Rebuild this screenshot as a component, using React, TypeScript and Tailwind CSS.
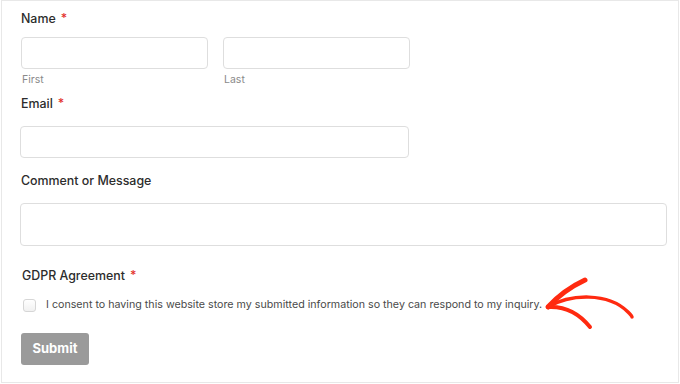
import React from "react";

const font = { fontFamily: "Inter, 'Liberation Sans', sans-serif" };

function Label({ text, required }: { text: string; required?: boolean }) {
  return (
    <div className="text-[12.4px] leading-[16px] font-medium text-[#2c2c2c]">
      {text}
      {required && <span className="text-[#e3342f] ml-[5px]">*</span>}
    </div>
  );
}

export default function App() {
  return (
    <div className="w-[680px] h-[384px] bg-white relative overflow-hidden" style={font}>
      <div className="ml-[1px] w-[678px] h-[383px] border border-[#e8e8e8] pl-[19px] pt-[10px] flex flex-col">
        <Label text="Name" required />
        <div className="flex gap-[15px] mt-[10px] w-[389px]">
          <div className="flex flex-col w-[187px]">
            <div className="h-[32px] border border-[#dedede] rounded-[4px] bg-white" />
            <div className="text-[10.5px] leading-[14px] text-[#8a8a8a] mt-[4px] ml-[1px]">First</div>
          </div>
          <div className="flex flex-col w-[187px]">
            <div className="h-[32px] border border-[#dedede] rounded-[4px] bg-white" />
            <div className="text-[10.5px] leading-[14px] text-[#8a8a8a] mt-[4px] ml-[1px]">Last</div>
          </div>
        </div>
        <div className="mt-[9px]">
          <Label text="Email" required />
        </div>
        <div className="mt-[14px] w-[389px] h-[32px] border border-[#dedede] rounded-[4px] ml-[-1px]" />
        <div className="mt-[15px]">
          <Label text="Comment or Message" />
        </div>
        <div className="mt-[14px] w-[647px] h-[43px] border border-[#dedede] rounded-[4px] ml-[-1px]" />
        <div className="mt-[22px] ml-[1px]">
          <Label text="GDPR Agreement" required />
        </div>
        <div className="mt-[14px] flex items-center ml-[2px]">
          <div className="w-[13px] h-[13px] border border-[#d6d6d6] rounded-[3px] bg-gradient-to-b from-white to-[#f1f1f1]" />
          <div className="ml-[10px] text-[10.7px] leading-[14px] text-[#4a4a4a]">
            I consent to having this website store my submitted information so they can respond to my inquiry.
          </div>
        </div>
        <div className="mt-[21px]">
          <button className="w-[68px] h-[32px] bg-[#9a9a9a] rounded-[3px] text-white text-[13px] font-bold">
            Submit
          </button>
        </div>
      </div>
      <svg
        className="absolute left-[540px] top-[272px]"
        width="100"
        height="60"
        viewBox="0 0 100 60"
        fill="none"
        stroke="#ff2a10"
        strokeLinecap="round"
        strokeLinejoin="round"
      >
        <path d="M8 35 C 18 24, 30 15, 45 8" strokeWidth="5" />
        <path d="M8 35 C 30 22, 68 20, 88 40 C 90 42, 92 44, 92 45" strokeWidth="3.5" />
        <path d="M8 35 C 24 34, 38 40, 50 55" strokeWidth="4" />
      </svg>
    </div>
  );
}
